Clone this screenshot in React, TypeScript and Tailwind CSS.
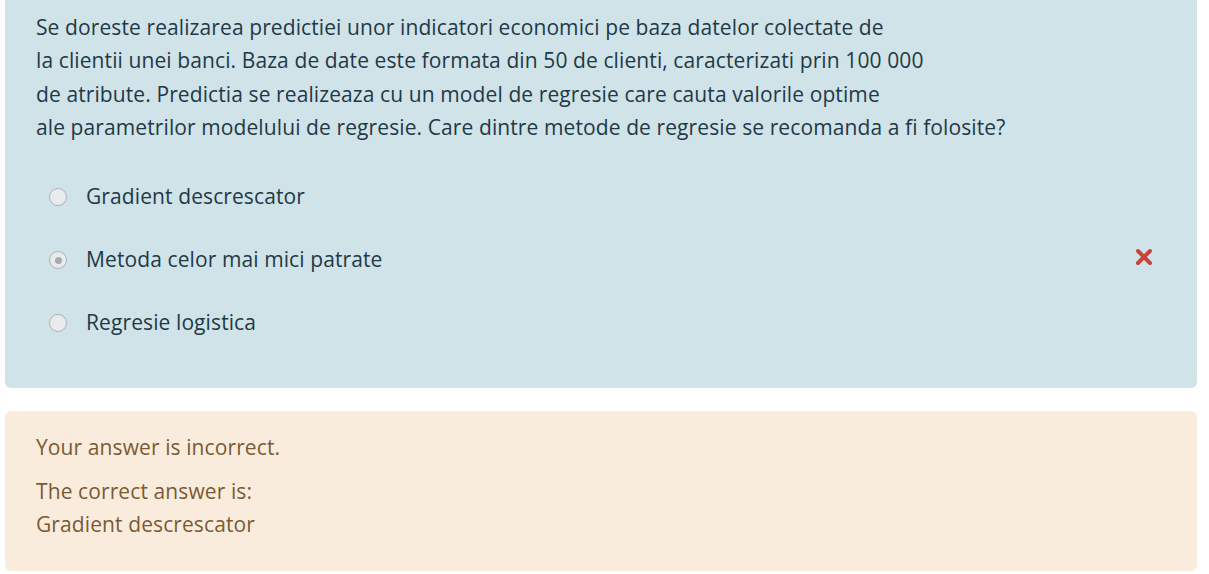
import { useState } from "react";

const OPTIONS = [
  "Gradient descrescator",
  "Metoda celor mai mici patrate",
  "Regresie logistica",
];

function Radio({ checked }: { checked: boolean }) {
  return (
    <span className="flex h-[18px] w-[18px] shrink-0 items-center justify-center rounded-full border-[1.5px] border-[#adb1b4] bg-[#e9ecee]">
      {checked && <span className="h-[7px] w-[7px] rounded-full bg-[#a7abae]" />}
    </span>
  );
}

function WrongMark() {
  return (
    <svg width="18" height="18" viewBox="0 0 18 18" className="shrink-0">
      <path d="M3 3 L15 15 M15 3 L3 15" stroke="#c8453b" strokeWidth="4" strokeLinecap="round" />
    </svg>
  );
}

export default function App() {
  const [selected] = useState(1);

  return (
    <div className="min-h-screen bg-white pl-[5px] pr-[12px] font-['Open_Sans',sans-serif] text-[21px] leading-[33.4px] tracking-[0.1px]">
      {/* Question formulation */}
      <div className="rounded-b-md bg-[#d0e3e8] pb-[33px] pl-[31px] pr-[40px] pt-[11px] text-[#1f3947]">
        <p>
          Se doreste realizarea predictiei unor indicatori economici pe baza datelor colectate de
          <br />
          la clientii unei banci. Baza de date este formata din 50 de clienti, caracterizati prin 100 000
          <br />
          de atribute. Predictia se realizeaza cu un model de regresie care cauta valorile optime
          <br />
          ale parametrilor modelului de regresie. Care dintre metode de regresie se recomanda a fi folosite?
        </p>

        <div className="mt-[21px]">
          {OPTIONS.map((opt, i) => (
            <div key={opt} className="flex h-[63px] items-center">
              <span className="ml-[13px]">
                <Radio checked={i === selected} />
              </span>
              <span className="ml-[19px] flex-1">{opt}</span>
              {i === selected && (
                <span className="mr-[4px] -mt-[6px]">
                  <WrongMark />
                </span>
              )}
            </div>
          ))}
        </div>
      </div>

      {/* Outcome */}
      <div className="mt-[23px] rounded-md bg-[#faecdd] pb-[29px] pl-[31px] pr-[31px] pt-[20px] text-[#7a5a33]">
        <p>Your answer is incorrect.</p>
        <p className="mt-[11px]">
          The correct answer is:
          <br />
          Gradient descrescator
        </p>
      </div>
    </div>
  );
}
